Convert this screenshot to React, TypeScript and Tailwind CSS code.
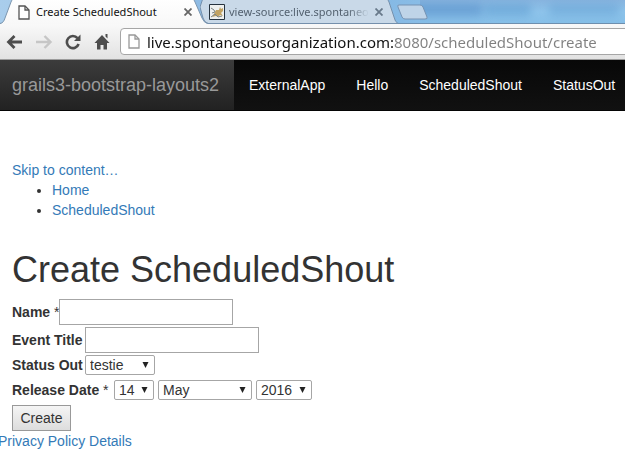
import type { ReactNode } from "react";

const tabFont = "font-['Noto_Sans','Open_Sans',sans-serif]";

function PageIcon({ className }: { className: string }) {
  return (
    <svg className={className} viewBox="0 0 12 15" fill="#fff" stroke="currentColor" strokeWidth="1.3">
      <path d="M1 1h6l4 4v9H1z" />
      <path d="M7 1v4h4" fill="none" />
    </svg>
  );
}

function CloseButton({ className, label }: { className: string; label: string }) {
  return (
    <button type="button" aria-label={label} className={`relative shrink-0 ${className}`}>
      <svg className="size-2" viewBox="0 0 8 8" stroke="currentColor" strokeWidth="1.8">
        <path d="M0.5 0.5l7 7M7.5 0.5l-7 7" />
      </svg>
    </button>
  );
}

function TabStrip() {
  return (
    <div className="relative flex h-6 overflow-hidden bg-linear-to-r from-[#a9cdec] via-[#7fb1df] to-[#9ad2f4]">
      <div className="absolute inset-y-0 right-0 left-[420px] overflow-hidden" aria-hidden="true">
        <div className="absolute inset-0 bg-linear-to-b from-[#87b4df] via-[#8ec4eb] to-[#86bfe8]" />
        <div className="absolute top-1 -left-4 h-3 w-20 rounded-full bg-[#4e87c4]/60 blur-[5px]" />
        <div className="absolute top-1 left-16 h-3 w-12 rounded-full bg-[#5797cd]/50 blur-[4px]" />
        <div className="absolute top-1 left-32 h-3 w-18 rounded-full bg-[#5797cd]/40 blur-[4px]" />
      </div>
      <div className="absolute inset-x-0 bottom-0 h-px bg-[#6e8fae]" />

      <div className="relative z-10 flex h-6 w-[208px] shrink-0 items-center pr-3 pl-[18px]">
        <svg className="absolute inset-0 h-6 w-[208px]" viewBox="0 0 208 24">
          <defs>
            <linearGradient id="activeTab" x1="0" y1="0" x2="0" y2="1">
              <stop offset="0" stopColor="#fff" />
              <stop offset="1" stopColor="#f8f8f8" />
            </linearGradient>
          </defs>
          <path d="M0 24C3 23 4 21 5 18L11 2Q12-1 14-2H192Q194-1 195 2L202 18Q204 23 208 24Z" fill="url(#activeTab)" />
          <path d="M0 23.5C3 23 4 21 5 18L11 2Q12-1 14-2M192-2Q194-1 195 2L202 18Q204 23 208 23.5" fill="none" stroke="#7c96af" />
        </svg>
        <PageIcon className="relative h-[15px] w-3 shrink-0 text-[#555]" />
        <span className={`relative ml-1.5 grow text-[11px] whitespace-nowrap text-[#111] ${tabFont}`}>Create ScheduledShout</span>
        <CloseButton className="mr-1 text-[#666]" label="Close Create ScheduledShout" />
      </div>

      <div className="relative -ml-2 flex h-6 w-[198px] shrink-0 items-center pr-2.5 pl-[9px]">
        <svg className="absolute inset-0 h-6 w-[198px]" viewBox="0 0 198 24">
          <path d="M0 7L3-2H186Q188-1 189 2L194 17Q195 22 198 23.5H8Q4 22 3 18Z" fill="#c9d9e8" stroke="#7590ac" />
        </svg>
        <svg className="relative size-4 shrink-0" viewBox="0 0 16 16">
          <path d="M.5.5h15v15H.5z" fill="#eef0ef" stroke="#26333f" />
          <path d="M6 8l1-2 3 0 1-3 1 2 2-1v3l-2 2 2 3-3-1-2 2-2-1-4 1 2-3z" fill="#c2a362" />
          <path d="M2 4l3 2 1 2-3 1M2 13l4-3 3 3 4-1" fill="none" stroke="#7c8483" />
        </svg>
        <span className={`relative ml-1 w-[140px] shrink-0 overflow-hidden mask-r-from-85% text-[11px] whitespace-nowrap text-[#53616f] ${tabFont}`}>
          view-source:live.spontaneous
        </span>
        <CloseButton className="ml-1.5 text-[#68798a]" label="Close view-source" />
      </div>

      <button type="button" aria-label="New tab" className="relative -ml-0.5 h-6 w-8 shrink-0">
        <svg className="h-6 w-8" viewBox="0 0 32 24">
          <path d="M3 5h21q2 0 3 2l4 10q1 2-2 2H9q-2 0-3-2L2 7q-1-2 1-2z" fill="#bfd4e8" stroke="#7693b3" />
        </svg>
      </button>
    </div>
  );
}

function Toolbar() {
  return (
    <div className="flex h-9 items-start overflow-hidden border-b border-[#9b9b9b] bg-linear-to-b from-[#f9f9f9] to-[#e2e2e2] pt-1 pl-1.5">
      <div className="flex h-[27px] w-[114px] shrink-0 items-center text-[#4d4d4d]">
        <button type="button" aria-label="Back" className="w-[30px]">
          <svg className="h-4 w-[17px]" viewBox="0 0 17 16" fill="none" stroke="currentColor" strokeWidth="2.8">
            <path d="M16 8H3M8.500 2L2.500 8l6 6" />
          </svg>
        </button>
        <button type="button" aria-label="Forward" className="w-[29px] text-[#c6c6c6]">
          <svg className="h-4 w-[17px]" viewBox="0 0 17 16" fill="none" stroke="currentColor" strokeWidth="2.4">
            <path d="M0 8h14M8.500 2l6 6-6 6" />
          </svg>
        </button>
        <button type="button" aria-label="Reload" className="w-[29px]">
          <svg className="size-4" viewBox="0 0 16 16">
            <path d="M12.500 4.200A6 6 0 1 0 13.600 10" fill="none" stroke="currentColor" strokeWidth="2.6" />
            <path d="M15.500.5V7H9z" fill="currentColor" />
          </svg>
        </button>
        <button type="button" aria-label="Home">
          <svg className="size-4" viewBox="0 0 16 16" fill="currentColor">
            <path d="M8 1l7.500 8H13v6.500H9.500V11h-3v4.500H3V9H.5zM11.500 0h2v4.500l-2-2z" />
          </svg>
        </button>
      </div>
      <div className="-mr-2 flex h-[27px] min-w-0 grow items-center rounded-sm border border-[#a6a6a6] bg-white pl-[7px]">
        <PageIcon className="h-[15px] w-3 shrink-0 text-[#999]" />
        <input
          type="text"
          aria-label="Address"
          defaultValue="live.spontaneousorganization.com:8080/scheduledShout/create"
          className={`ml-[7px] h-6 min-w-0 grow bg-[linear-gradient(90deg,#111_246px,#808080_246px)] bg-clip-text text-[15px] text-transparent caret-black outline-none ${tabFont}`}
        />
      </div>
    </div>
  );
}

function Navbar() {
  return (
    <nav className="flex h-[51px] overflow-hidden border-b border-[#050505] bg-linear-to-b from-[#080808] to-[#111] whitespace-nowrap">
      <a href="#brand" className="flex w-[234px] shrink-0 items-center bg-linear-to-b from-[#3c3c3c] to-[#222] pl-3 text-lg text-[#999]">
        grails3-bootstrap-layouts2
      </a>
      <div className="flex gap-px">
        {["ExternalApp", "Hello", "ScheduledShout", "StatusOut"].map((name) => (
          <a key={name} href={`#${name}`} className="flex shrink-0 items-center px-[15px] text-white">
            {name}
          </a>
        ))}
      </div>
    </nav>
  );
}

function Select({ id, label, className, options }: { id: string; label?: string; className: string; options: string[] }) {
  return (
    <span className={`relative ${className}`}>
      <select id={id} aria-label={label} className="block h-5 w-full appearance-none rounded-xs border border-[#a6a6a6] bg-white pr-4 pl-1 leading-4">
        {options.map((option) => (
          <option key={option}>{option}</option>
        ))}
      </select>
      <svg className="pointer-events-none absolute top-[7px] right-1.5 h-1.5 w-[7px]" viewBox="0 0 7 6" fill="#222">
        <path d="M.5 0h6l-3 6z" />
      </svg>
    </span>
  );
}

function Row({ children, className = "" }: { children: ReactNode; className?: string }) {
  return <div className={`flex items-center ${className}`}>{children}</div>;
}

const fieldClass = "h-[26px] w-[174px] border border-[#a6a6a6] bg-white px-1 outline-none";

export default function App() {
  return (
    <div className="min-h-screen overflow-hidden bg-white font-['Liberation_Sans',Arial,sans-serif] text-sm leading-5 text-[#333]">
      <TabStrip />
      <Toolbar />
      <Navbar />
      <main className="px-3 pt-[49px]">
        <a href="#content" className="block text-[#337ab7]">Skip to content…</a>
        <ul className="list-disc pl-10">
          <li><a href="#home" className="text-[#337ab7]">Home</a></li>
          <li><a href="#list" className="text-[#337ab7]">ScheduledShout</a></li>
        </ul>
        <h1 id="content" className="mt-[30px] text-4xl leading-10">Create ScheduledShout</h1>
        <form className="mt-[9px]" onSubmit={(event) => event.preventDefault()}>
          <Row>
            <label htmlFor="name"><b>Name</b> *</label>
            <input id="name" type="text" className={fieldClass} />
          </Row>
          <Row className="mt-0.5">
            <label htmlFor="title" className="min-w-[73px] font-bold">Event Title</label>
            <input id="title" type="text" className={fieldClass} />
          </Row>
          <Row className="mt-0.5">
            <label htmlFor="status" className="min-w-[73px] font-bold">Status Out</label>
            <Select id="status" className="w-[70px]" options={["testie"]} />
          </Row>
          <Row className="mt-[5px] gap-1">
            <label htmlFor="day" className="min-w-[98px]"><b>Release Date</b> *</label>
            <Select id="day" className="w-10" options={["14"]} />
            <Select id="month" label="Month" className="w-[94px]" options={["May"]} />
            <Select id="year" label="Year" className="w-14" options={["2016"]} />
          </Row>
          <button type="submit" className="mt-[5px] block h-[26px] w-[59px] border border-[#999] bg-linear-to-b from-[#f5f5f5] to-[#ddd]">
            Create
          </button>
        </form>
      </main>
      <footer className="-ml-0.5">
        <a href="#privacy" className="text-[#337ab7]">Privacy Policy Details</a>
      </footer>
    </div>
  );
}
